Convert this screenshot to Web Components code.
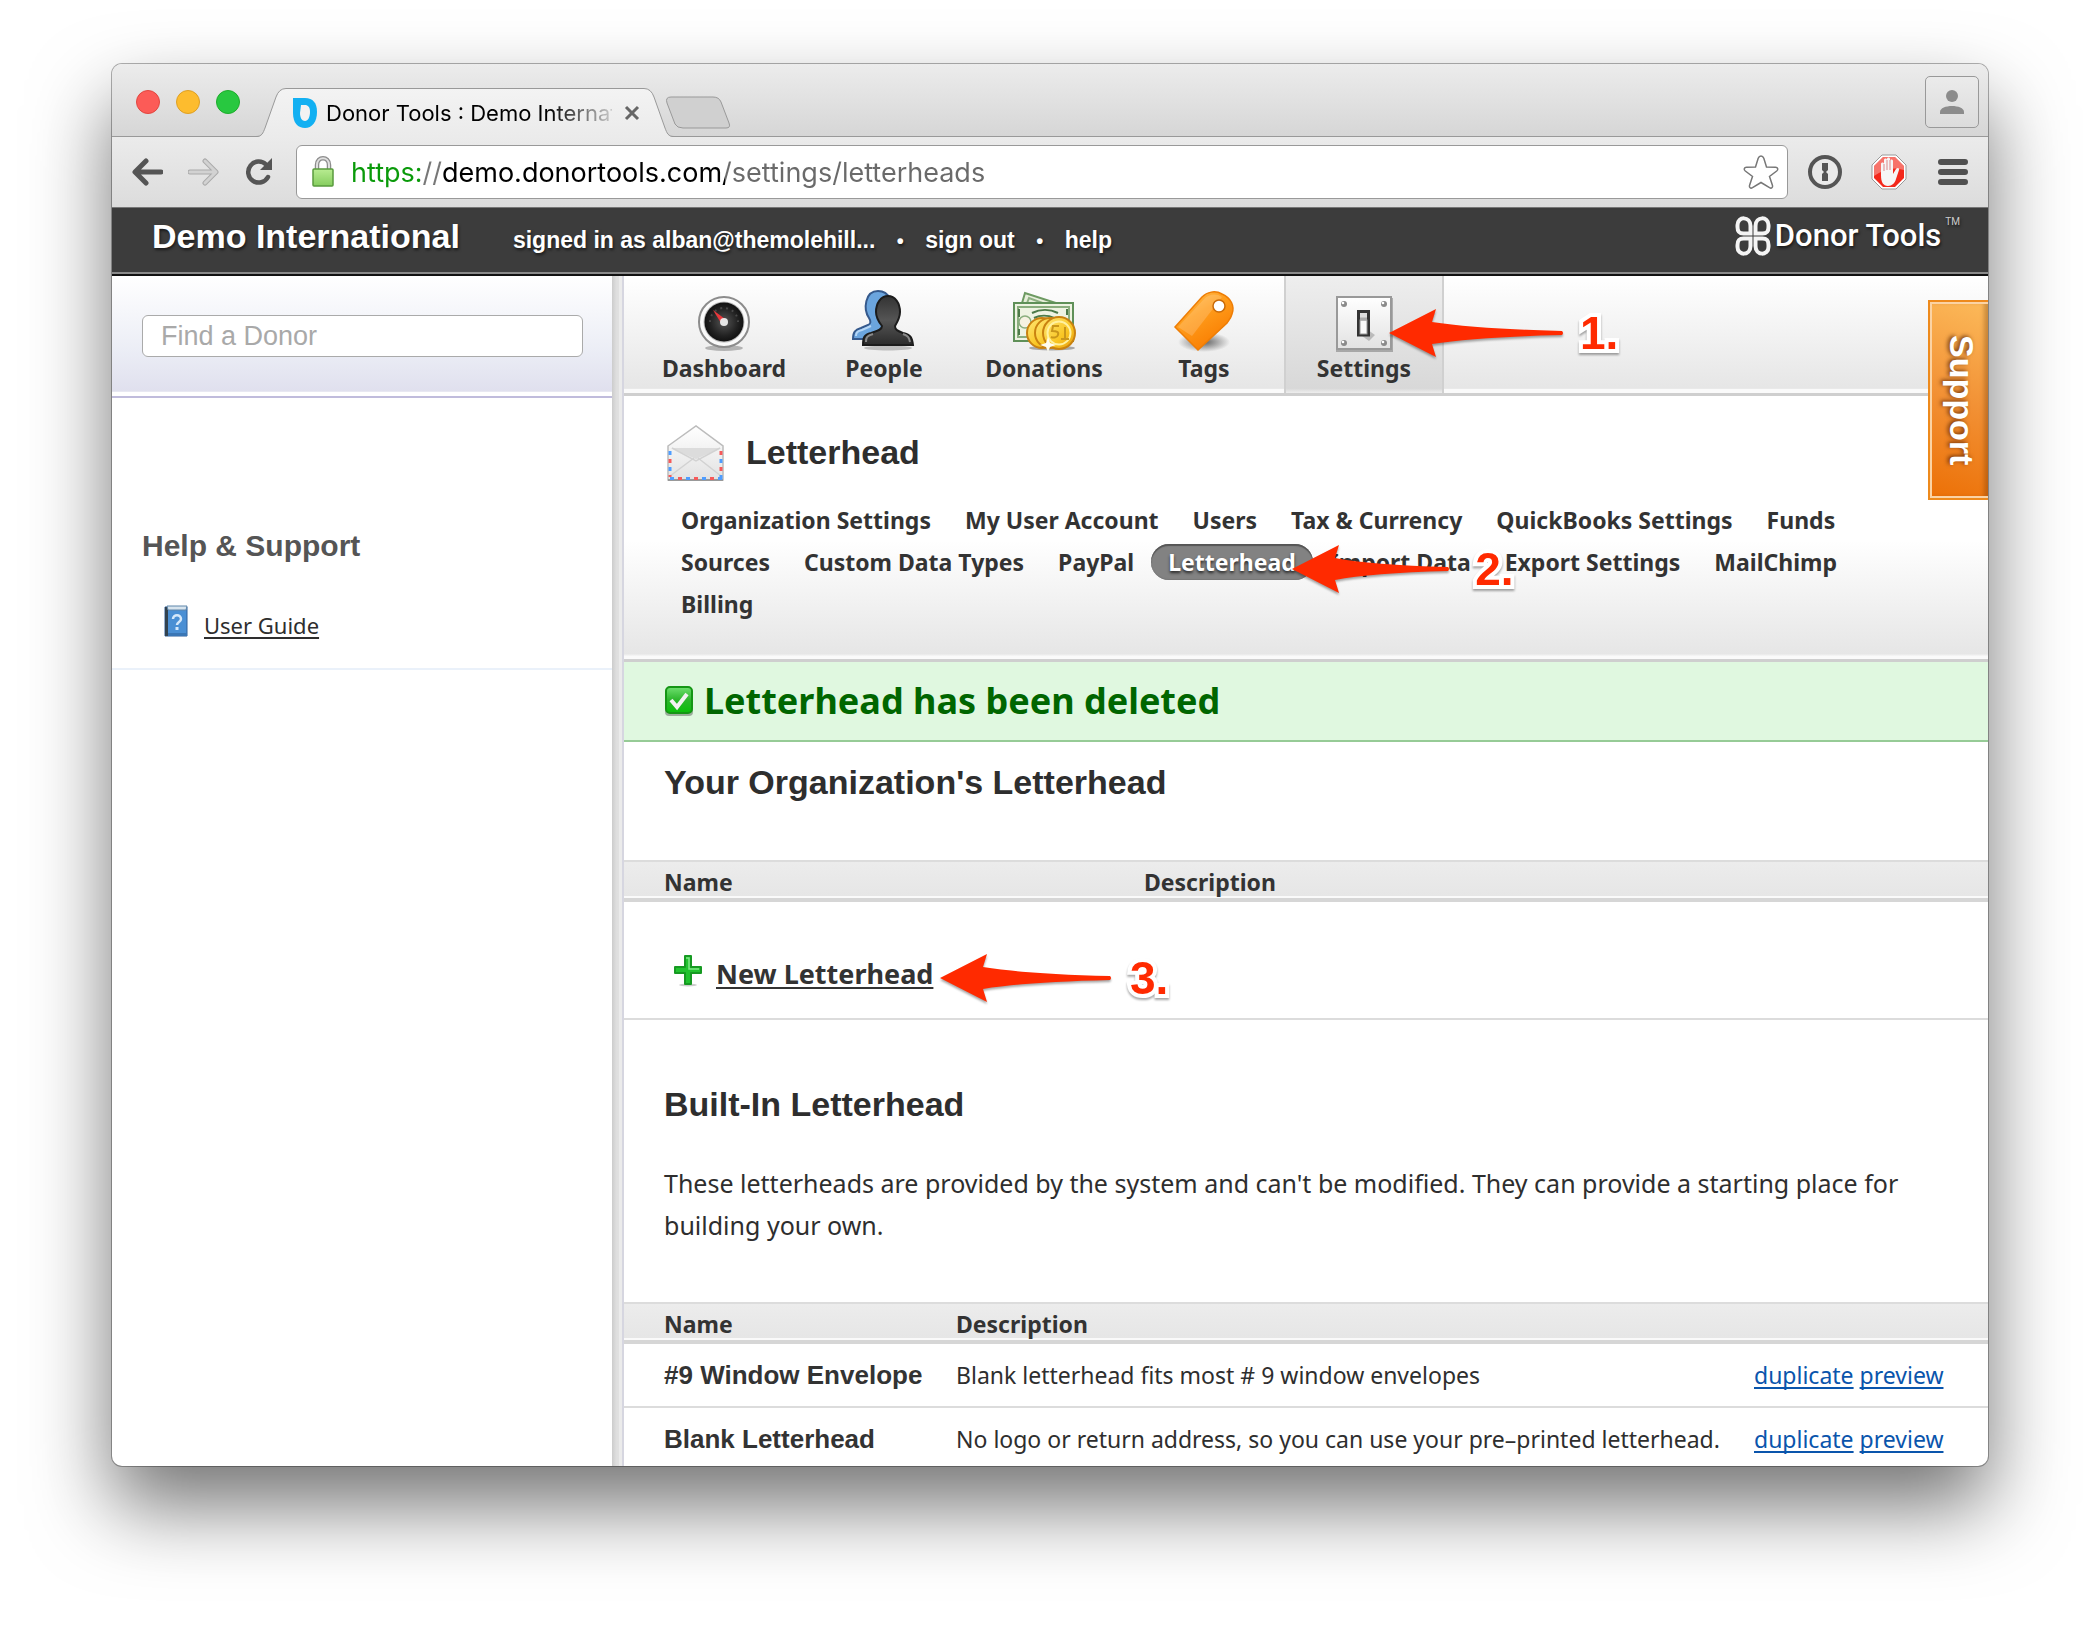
<!DOCTYPE html>
<html lang="en">
<head>
<meta charset="utf-8">
<title>Donor Tools : Demo International</title>
<style>
  html, body { height: 100%; }
  body {
    margin: 0; padding: 64px 112px 160px; box-sizing: border-box; background: #fff; overflow: hidden;
    font-family: "Noto Sans", "Open Sans", sans-serif; font-size: 23px; color: #2e2e2e;
    --head: "Liberation Sans", Arial, sans-serif;
    --chrome: Inter, Roboto, sans-serif;
  }
</style>
</head>
<body>

<app-window>
  <title-bar slot="chrome">Donor Tools : Demo International</title-bar>
  <tool-bar slot="chrome" url="https://demo.donortools.com/settings/letterheads"></tool-bar>

  <site-header org="Demo International">
    <a href="#account">signed in as alban@themolehill...</a>
    <a href="#signout">sign out</a>
    <a href="#help">help</a>
  </site-header>

  <page-columns>
    <side-bar slot="side"></side-bar>

    <main-nav>
      <nav-tab icon="gauge">Dashboard</nav-tab>
      <nav-tab icon="people">People</nav-tab>
      <nav-tab icon="money">Donations</nav-tab>
      <nav-tab icon="tag">Tags</nav-tab>
      <nav-tab icon="switch" current>Settings<note-callout slot="note" number="1." length="175"></note-callout></nav-tab>
    </main-nav>

    <page-head heading="Letterhead">
      <sub-link>Organization Settings</sub-link>
      <sub-link>My User Account</sub-link>
      <sub-link>Users</sub-link>
      <sub-link>Tax &amp; Currency</sub-link>
      <sub-link>QuickBooks Settings</sub-link>
      <sub-link>Funds</sub-link>
      <sub-link>Sources</sub-link>
      <sub-link>Custom Data Types</sub-link>
      <sub-link>PayPal</sub-link>
      <sub-link current>Letterhead<note-callout slot="note" number="2." length="158" gap="25"></note-callout></sub-link>
      <sub-link>Import Data</sub-link>
      <sub-link>Export Settings</sub-link>
      <sub-link>MailChimp</sub-link>
      <sub-link>Billing</sub-link>
    </page-head>

    <flash-message>Letterhead has been deleted</flash-message>

    <page-section heading="Your Organization's Letterhead">
      <letterhead-table></letterhead-table>
      <new-link>New Letterhead<note-callout slot="note" number="3." length="172" gap="18"></note-callout></new-link>
    </page-section>

    <page-section heading="Built-In Letterhead" spaced>
      <span slot="intro">These letterheads are provided by the system and can't be modified. They can provide a starting place for building your own.</span>
      <letterhead-table actions>
        <letterhead-item name="#9 Window Envelope">Blank letterhead fits most # 9 window envelopes</letterhead-item>
        <letterhead-item name="Blank Letterhead">No logo or return address, so you can use your pre–printed letterhead.</letterhead-item>
      </letterhead-table>
    </page-section>

    <support-tab slot="support">Support</support-tab>
  </page-columns>
</app-window>

<script>
const ICONS = {
  gauge: `<svg viewBox="0 0 64 64" width="64" height="64"><defs><radialGradient id="g"><stop offset="0" stop-color="#555"/><stop offset=".7" stop-color="#222"/><stop offset="1" stop-color="#111"/></radialGradient></defs><ellipse cx="32" cy="59" rx="19" ry="3" fill="#000" opacity=".25"/><circle cx="32" cy="33" r="25" fill="#fafafa" stroke="#8c8c8c" stroke-width="2"/><circle cx="32" cy="33" r="20.500" fill="#bbb"/><circle cx="32" cy="33" r="19.500" fill="url(#g)"/><path d="M18 33a14 14 0 0 1 28 0" fill="none" stroke="#484848" stroke-width="2" stroke-dasharray="2 4"/><path d="M21 21l12 9-4 4z" fill="#e8383c"/><circle cx="32" cy="33" r="4" fill="#e6e6e6"/></svg>`,
  people: `<svg viewBox="0 0 64 64" width="64" height="64"><defs><linearGradient id="g" x2="0" y2="1"><stop offset="0" stop-color="#333"/><stop offset=".5" stop-color="#555"/><stop offset="1" stop-color="#2b2b2b"/></linearGradient></defs><ellipse cx="36" cy="59" rx="24" ry="2.500" fill="#000" opacity=".2"/><path d="M1 50c0-7 2-9 8-11l7-3c3-1 3-4 1-7-6-9-4-27 9-27 12 0 15 12 12 24l-3 24z" fill="#6ba5de" stroke="#35598c" stroke-width="2"/><path d="M4 47c0-4 2-5 6-6l9-4" fill="none" stroke="#b5d6f5" stroke-width="2"/><path d="M11 56c0-8 1-10 8-12 6-2 11-3 11-7-4-5-6-9-6-14 0-9 5-16 12-16s12 7 12 16c0 5-2 9-5 14 0 4 3 5 8 7 8 2 9 4 10 12z" fill="url(#g)" stroke="#1c1c1c" stroke-width="2"/><path d="M14 53c0-5 1-6 7-8M58 53c-1-5-2-6-7-8" fill="none" stroke="#888" stroke-width="2"/></svg>`,
  money: `<svg viewBox="0 0 64 64" width="64" height="64"><defs><linearGradient id="g" x2="1" y2="1"><stop offset="0" stop-color="#ffe97a"/><stop offset=".6" stop-color="#f9c522"/><stop offset="1" stop-color="#e79c10"/></linearGradient></defs><ellipse cx="40" cy="59" rx="23" ry="2.500" fill="#000" opacity=".3"/><path d="M8 21L13 4l40 13-4 20z" fill="#e6eeda" stroke="#6d9a62" stroke-width="2"/><path d="M12 22L17 9l30 11" fill="none" stroke="#8db082" stroke-width="2"/><rect x="2" y="14" width="59" height="38" fill="#eef3e2" stroke="#5f9058" stroke-width="2"/><rect x="6" y="18" width="51" height="30" fill="none" stroke="#8aae7e" stroke-width="2"/><circle cx="13" cy="33" r="6" fill="#f6f2e2" stroke="#8aae7e" stroke-width="1.500"/><path d="M20 24c8-4 18-4 26 0M22 29c6-3 14-3 20 0M7 20v8M55 20v6M7 40v6" fill="none" stroke="#4d7a48" stroke-width="2"/><g fill="url(#g)" stroke="#c98210" stroke-width="2"><circle cx="30" cy="44" r="15"/><circle cx="38" cy="44" r="15"/><circle cx="47" cy="44" r="16"/></g><circle cx="47" cy="44" r="11.500" fill="none" stroke="#fff1a0" stroke-width="2"/><path d="M47 37h-6l-1 5c5 0 7 1 6 4-1 3-5 3-7 2M53 38v12M49 50h8" fill="none" stroke="#c9961a" stroke-width="2"/><path d="M36 48l2 6 6 2-6 2-2 5-2-5-6-2 6-2z" fill="#fffdf0"/></svg>`,
  tag: `<svg viewBox="0 0 64 64" width="64" height="64"><defs><linearGradient id="g" x2=".6" y2="1"><stop offset="0" stop-color="#ffc15a"/><stop offset=".45" stop-color="#ff9d1c"/><stop offset="1" stop-color="#f97c00"/></linearGradient><radialGradient id="s"><stop offset="0" stop-opacity=".6"/><stop offset="1" stop-opacity="0"/></radialGradient></defs><ellipse cx="32" cy="53" rx="26" ry="10" fill="url(#s)"/><path d="M3 38L30 8c5-5 13-7 20-3 9 4 13 12 10 20-1 4-3 6-5 9L26 61z" fill="url(#g)" stroke="#ee7d05" stroke-width="1.500"/><path d="M6 38L32 10c5-5 12-6 18-2L20 47 6 38z" fill="#fff" opacity=".18"/><circle cx="47" cy="17" r="6" fill="#fff" stroke="#c96a08" stroke-width="1.500"/></svg>`,
  switch: `<svg viewBox="0 0 64 64" width="64" height="64"><defs><linearGradient id="g" x2="0" y2="1"><stop offset="0" stop-color="#fff"/><stop offset="1" stop-color="#e2e2e2"/></linearGradient></defs><rect x="4" y="9" width="57" height="54" fill="#000" opacity=".25"/><rect x="5" y="8" width="54" height="52" fill="url(#g)" stroke="#999" stroke-width="2"/><g fill="#8a8a8a"><circle cx="12" cy="15" r="3"/><circle cx="52" cy="15" r="3"/><circle cx="12" cy="54" r="3"/><circle cx="52" cy="54" r="3"/></g><g fill="#fff"><circle cx="11" cy="14" r="1.300"/><circle cx="51" cy="14" r="1.300"/><circle cx="11" cy="53" r="1.300"/><circle cx="51" cy="53" r="1.300"/></g><path d="M36 41l7 5-6 6-7-5z" fill="#000" opacity=".2"/><path d="M26.500 46V22.500h10V46z" fill="#ddd" stroke="#333" stroke-width="3"/><rect x="28" y="31" width="7" height="14" fill="#fafafa" stroke="#999" stroke-width="1"/><path d="M28 30h7" stroke="#aaa" stroke-width="3"/></svg>`,
  envelope: `<svg viewBox="0 0 60 60" width="60" height="60"><defs><linearGradient id="g" x2="0" y2="1"><stop offset="0" stop-color="#fff"/><stop offset="1" stop-color="#e2e2e2"/></linearGradient></defs><path d="M2 22L30 2l27 20v34H2z" fill="url(#g)" stroke="#bcbcbc" stroke-width="1.500"/><path d="M5 24h50L30 35z" fill="#dcdcdc"/><path d="M4 52l24-18M55 52L32 34M6 24l24 13 24-13" fill="none" stroke="#d2d2d2" stroke-width="1.500"/><path d="M2 56h55" stroke="#999" stroke-width="2"/><g fill="none" stroke-width="3"><path d="M4 27v28" stroke="#4f9dff" stroke-dasharray="4 12"/><path d="M4 35v18" stroke="#f65a5a" stroke-dasharray="4 12"/><path d="M55 27v24" stroke="#f65a5a" stroke-dasharray="4 12"/><path d="M55 35v20" stroke="#4f9dff" stroke-dasharray="4 12"/><path d="M4 54.500h53" stroke="#4f9dff" stroke-dasharray="4 12"/><path d="M12 54.500h40" stroke="#f65a5a" stroke-dasharray="4 12"/></g></svg>`,
  check: `<svg viewBox="0 0 30 32" width="30" height="32"><defs><linearGradient id="g" x2="0" y2="1"><stop offset="0" stop-color="#6fe070"/><stop offset=".5" stop-color="#2cb62c"/><stop offset="1" stop-color="#08c008"/></linearGradient></defs><rect x="1" y="3" width="28" height="28" rx="4" fill="#000" opacity=".3"/><rect x="2" y="2" width="26" height="26" rx="4" fill="url(#g)" stroke="#159615" stroke-width="2"/><path d="M7 15l6 7L23 9" fill="none" stroke="#f2f2f2" stroke-width="4"/></svg>`,
  plus: `<svg viewBox="0 0 30 32" width="30" height="32"><ellipse cx="15" cy="30" rx="9" ry="1.500" fill="#000" opacity=".2"/><path d="M12 1h6v11h10v6H18v11h-6V18H2v-6h10z" fill="#22c32f" stroke="#169a22" stroke-width="2" stroke-linejoin="round"/><path d="M13 3h3v11h10" fill="none" stroke="#7fe886" stroke-width="1.500"/></svg>`,
  book: `<svg viewBox="0 0 28 32" width="28" height="32"><path d="M3 2h22v29H3z" fill="#4a8fd4" stroke="#2c5f9c" stroke-width="1"/><path d="M3 2h3v29H3z" fill="#32424f"/><path d="M5 1h20l-1 4H6z" fill="#d7e4ee" stroke="#5e86aa" stroke-width="1"/><path d="M6 28h19v3H6z" fill="#3a76b5"/><path d="M11 14c0-5 8-5 8 0 0 3-4 3-4 6" fill="none" stroke="#d5e8fa" stroke-width="2.500"/><rect x="13.500" y="22" width="3" height="3" fill="#d5e8fa"/></svg>`,
  favicon: `<svg viewBox="0 0 26 32" width="26" height="32"><path d="M1 1h12c8 0 12 5 12 14 0 10-5 16-12 16S1 26 1 16z" fill="#12b0f2"/><path d="M9 8h4c3 0 5 2 5 7s-2 9-5 9-5-3-5-8z" fill="#f2f2f2"/></svg>`,
  close: `<svg viewBox="0 0 16 16" width="16" height="16"><path d="M2 2l12 12M14 2L2 14" stroke="#666" stroke-width="3"/></svg>`,
  back: `<svg viewBox="0 0 32 28" width="32" height="28"><path d="M30 14H5M15 3L4 14l11 11" fill="none" stroke="currentColor" stroke-width="5" stroke-linejoin="round" stroke-linecap="round"/></svg>`,
  forward: `<svg viewBox="0 0 32 28" width="32" height="28"><path d="M2 14h25M17 3l11 11-11 11" fill="none" stroke="#aaa" stroke-width="5" stroke-linejoin="round" stroke-linecap="round"/><path d="M2 14h25M17 3l11 11-11 11" fill="none" stroke="#d2d2d2" stroke-width="3" stroke-linejoin="round" stroke-linecap="round"/></svg>`,
  reload: `<svg viewBox="0 0 28 28" width="28" height="28"><path d="M23 19a10.500 10.500 0 1 1-2-12.500" fill="none" stroke="currentColor" stroke-width="4.500" stroke-linecap="round"/><path d="M27 0v12H15z" fill="currentColor"/></svg>`,
  lock: `<svg viewBox="0 0 24 32" width="24" height="32"><path d="M6 14V9c0-9 12-9 12 0v5" fill="none" stroke="#8d8d8d" stroke-width="4.500"/><path d="M6 14V9c0-9 12-9 12 0v5" fill="none" stroke="#e0e0e0" stroke-width="2"/><defs><linearGradient id="g" x2="0" y2="1"><stop offset="0" stop-color="#b9ec92"/><stop offset="1" stop-color="#85cd5e"/></linearGradient></defs><rect x="2" y="13" width="20" height="17" rx="1" fill="url(#g)" stroke="#589a3c" stroke-width="1.500"/></svg>`,
  star: `<svg viewBox="0 0 36 36" width="36" height="36"><path d="M18 2c1.500 0 2.300 1 2.800 2.300L23.500 13l9 .3c2.500.2 3 2.200 1.200 3.700L26.500 22.500l3 9c.5 2-1 3.300-3 2.200L18 28.500l-8.500 5.200c-2 1.100-3.500-.2-3-2.200l3-9L2.300 17C.5 15.500 1 13.500 3.500 13.300l9-.3 2.700-8.700C15.700 3 16.500 2 18 2z" fill="#fff" stroke="#777" stroke-width="1.500"/></svg>`,
  key: `<svg viewBox="0 0 36 36" width="36" height="36"><circle cx="18" cy="18" r="15" fill="#e9e9e9" stroke="#555" stroke-width="4"/><path d="M15 9h6v7l-2 2 2 2v7h-6v-7l2-2-2-2z" fill="#555"/></svg>`,
  hand: `<svg viewBox="0 0 36 36" width="36" height="36"><path d="M11 1h14l10 10v14L25 35H11L1 25V11z" fill="#fff" stroke="#999" stroke-width="1"/><path d="M12 3h12l9 9v12l-9 9H12l-9-9V12z" fill="#f3281b"/><path d="M12 3h12l9 9v4C22 12 12 16 3 22V12z" fill="#fff" opacity=".35"/><path d="M10 21V10c0-2 3-2 3 0V6c0-2 3-2 3 0V5c0-2 3-2 3 0v2c0-2 3-2 3 0v13l3-5c1-2 4-1 3 1l-3 9c-1 4-4 7-8 7-5 0-7-4-7-11z" fill="#f6f6f6"/><path d="M13 10v7M16 6v10M19 6v10" stroke="#d88" stroke-width="1"/></svg>`,
  menu: `<svg viewBox="0 0 30 28" width="30" height="28"><path d="M3 4h24M3 14h24M3 24h24" stroke="#505050" stroke-width="6" stroke-linecap="round"/></svg>`,
  person: `<svg viewBox="0 0 26 26" width="26" height="26"><circle cx="13" cy="7" r="6" fill="#8c8c8c"/><path d="M1 25v-2c0-4 6-6 12-6s12 2 12 6v2z" fill="#8c8c8c"/></svg>`,
  logo: `<svg viewBox="0 0 36 40" width="36" height="40"><g fill="none" stroke="#f4f4f4" stroke-width="4"><path d="M15.500 17.500V10C15.500 0 2.500 0 2.500 9v2c0 5 2 6.500 6 6.500zM20.500 17.500V10c0-10 13-10 13-1v2c0 5-2 6.500-6 6.500zM15.500 22.500V30c0 10-13 10-13 1v-2c0-5 2-6.500 6-6.500zM20.500 22.500V30c0 10 13 10 13 1v-2c0-5-2-6.500-6-6.500z"/></g></svg>`
};

const define = (name, template, setup) => customElements.define(name, class extends HTMLElement {
  constructor() {
    super();
    this.attachShadow({ mode: "open" }).innerHTML =
      "<style>:host,*{box-sizing:border-box}svg{display:block;flex:none}</style>" + (typeof template === "function" ? template(this) : template);
    if (setup) setup(this, this.shadowRoot);
  }
});

define("ui-icon", el => `<style>:host{display:block;flex:none}</style>${ICONS[el.getAttribute("name")]}`);

define("app-window", `<style>
  :host{display:flex;flex-direction:column;height:100%;border-radius:10px;background:#fff;overflow:hidden;
    box-shadow:0 0 0 1px rgba(0,0,0,.3),0 40px 80px rgba(0,0,0,.55)}
  .view{flex:1;min-height:0;overflow:hidden;display:flex;flex-direction:column}
</style><slot name="chrome"></slot><div class="view"><slot></slot></div>`);

define("title-bar", `<style>
  :host{display:flex;height:73px;flex:none;background:linear-gradient(#ececec,#d6d6d6);border-bottom:1px solid #999;padding:0 9px 0 24px;font-family:var(--chrome);color:#000}
  .lights{display:flex;gap:16px;align-items:center;height:76px;margin-right:16px}
  .lights button{width:24px;height:24px;border-radius:50%;padding:0;border:1px solid}
  .r{background:#fc5b57;border-color:#e2463f!important}.y{background:#fdbc2e;border-color:#dfa023!important}.g{background:#28c840;border-color:#1dad2b!important}
  .tab{position:relative;width:420px;margin-top:24px;height:49px;display:flex;align-items:center;padding:0 36px}
  .tab>svg{position:absolute;left:0;top:0}
  .tab>*:not(svg){position:relative}
  .t{flex:1;margin:0 12px 0 8px;font-size:22px;white-space:nowrap;overflow:hidden;-webkit-mask:linear-gradient(90deg,#000 78%,rgba(0,0,0,.15))}
  .x{border:0;background:none;padding:0}
  .new{border:0;background:none;padding:0;margin:32px 0 0 -11px;height:34px}
  .p{margin:12px 0 0 auto;width:54px;height:52px;border:1px solid #999;border-radius:5px;background:linear-gradient(#ebebeb,#dcdcdc);display:flex;align-items:center;justify-content:center;padding:0}
</style>
<div class="lights"><button class="r" aria-label="Close window"></button><button class="y" aria-label="Minimise"></button><button class="g" aria-label="Zoom"></button></div>
<div class="tab"><svg width="420" height="49" viewBox="0 0 420 49"><defs><linearGradient id="t" x2="0" y2="1"><stop offset="0" stop-color="#f3f3f3"/><stop offset="1" stop-color="#ebebeb"/></linearGradient></defs>
<path d="M0 49C6 49 7 45 9 40L20 9Q23 .5 30 .5H388Q395 .5 398 9L409 40C411 45 412 49 418 49z" fill="url(#t)"/><path d="M0 48.500C6 48.500 7 45 9 40L20 9Q23 .5 30 .5H388Q395 .5 398 9L409 40C411 45 412 48.500 418 48.500" fill="none" stroke="#999"/></svg>
<ui-icon name="favicon"></ui-icon><span class="t"><slot></slot></span><button class="x" aria-label="Close tab"><ui-icon name="close"></ui-icon></button></div>
<button class="new" aria-label="New tab"><svg width="66" height="34" viewBox="0 0 66 34"><path d="M6 1H48Q54 1 56 6L64 27Q66 32 61 32H18Q12 32 10 28L2 7Q0 1 6 1z" fill="#d0d0d0" stroke="#999"/></svg></button>
<button class="p" aria-label="Profile"><ui-icon name="person"></ui-icon></button>`);

define("tool-bar", `<style>
  :host{display:flex;align-items:center;height:71px;flex:none;padding:0 20px 0 19px;background:linear-gradient(#ebebeb,#dcdcdc);border-bottom:1px solid #777;font-family:var(--chrome)}
  button{border:0;background:none;padding:0;color:#555}
  .nav{display:flex;gap:25px;align-items:center;margin-right:23px}
  .box{flex:1;height:54px;display:flex;align-items:center;background:#fff;border:1px solid #999;border-radius:6px;padding:0 8px 0 14px;gap:16px}
  input{flex:1;min-width:0;border:0;outline:0;padding:0;height:40px;font:27px var(--chrome);color:#666;
    background:linear-gradient(90deg,#0a9a0a 69px,#777 69px 92px,#000 92px 374px,#6a6a6a 374px);-webkit-background-clip:text;background-clip:text;-webkit-text-fill-color:transparent}
  .ext{display:flex;gap:28px;align-items:center;margin-left:19px}
  .menu{padding-left:3px}
</style>
<div class="nav"><button aria-label="Back"><ui-icon name="back"></ui-icon></button><button aria-label="Forward"><ui-icon name="forward"></ui-icon></button><button aria-label="Reload"><ui-icon name="reload"></ui-icon></button></div>
<div class="box"><ui-icon name="lock"></ui-icon><input type="text" aria-label="Address"><button aria-label="Bookmark"><ui-icon name="star"></ui-icon></button></div>
<div class="ext"><button aria-label="Passwords"><ui-icon name="key"></ui-icon></button><button aria-label="Ad blocker"><ui-icon name="hand"></ui-icon></button><button class="menu" aria-label="Menu"><ui-icon name="menu"></ui-icon></button></div>`,
  (el, root) => { root.querySelector("input").value = el.getAttribute("url"); });

define("site-header", el => `<style>
  :host{display:flex;flex:none;align-items:baseline;height:68px;padding:8px 28px 0 40px;background:#3c3c3c;border-bottom:2px solid #111;box-shadow:inset 0 -2px #8a8a8a;font-family:var(--head);font-weight:bold;color:#fff;text-shadow:1px 2px 3px rgba(0,0,0,.6)}
  h1{margin:0 53px 0 0;font-size:34px;line-height:40px}
  nav{display:flex;font-size:23px}
  ::slotted(a){color:#fff;text-decoration:none}
  ::slotted(a:not(:first-child))::before{content:"•";display:inline-block;width:50px;text-align:center;font-size:20px}
  .logo{margin-left:auto;display:flex;align-items:center;gap:4px;align-self:flex-start;font:500 31px/40px Roboto,var(--head)}
  sup{font-size:10px;line-height:12px;align-self:flex-start;font-weight:normal;color:#ccc}
</style><h1>${el.getAttribute("org")}</h1><nav><slot></slot></nav><div class="logo"><ui-icon name="logo"></ui-icon><span>Donor Tools</span><sup>TM</sup></div>`);

define("page-columns", `<style>
  :host{display:flex;position:relative;flex:1;min-height:0;align-items:stretch}
  .side{width:500px;flex:none}
  .rule{width:12px;flex:none;background:linear-gradient(90deg,#ccc,#dedede 35%,#e0e0e0 55%,#ebebeb 60%,#ebebeb 83%,#d6d6e0 84%)}
  .main{flex:1;min-width:0}
</style><div class="side"><slot name="side"></slot></div><div class="rule"></div><div class="main"><slot></slot></div><slot name="support"></slot>`);

define("side-bar", `<style>
  :host{display:block}
  form{height:122px;padding:39px 29px 0 30px;background:linear-gradient(#fff,#eceef6 60%,#e0e0ee 96%,#fff 97%);border-bottom:2px solid #c0bcdc;margin:0}
  input{display:block;width:100%;height:42px;border:1px solid #aaa;border-radius:6px;padding:0 18px;font:27px var(--head);background:#fff;color:#333}
  input::placeholder{color:#a9a9a9;opacity:1}
  section{padding:126px 30px 30px;border-bottom:2px solid #eaf1fa}
  h3{margin:0 0 36px;font:bold 30px/44px var(--head);color:#555}
  .g{display:flex;align-items:center;gap:14px;padding-left:20px;height:34px}
  a{color:#2e2e2e;font-size:22px;text-decoration-thickness:2px;text-underline-offset:3px;text-decoration-skip-ink:none;padding-top:7px}
</style><form><input type="search" placeholder="Find a Donor" aria-label="Find a Donor"></form>
<section><h3>Help &amp; Support</h3><div class="g"><ui-icon name="book"></ui-icon><a href="#guide">User Guide</a></div></section>`);

define("main-nav", `<style>:host{display:flex;height:120px;padding-left:20px;background:linear-gradient(#fff,#e6e6e6 96%,#fafafa 97%);border-bottom:3px solid #cfcfcf}</style><slot></slot>`);

define("nav-tab", el => `<style>
  :host{display:block;position:relative;width:160px}
  a{display:flex;flex-direction:column;align-items:center;height:100%;padding-top:13px;font-weight:bold;font-size:23px;line-height:30px;color:#333;text-decoration:none;border:solid transparent;border-width:0 2px}
  :host([current]) a{background:linear-gradient(#eee,#d8d8d8 96%,#eee);border-color:#d0d0d0}
  ::slotted(note-callout){position:absolute;left:105px;top:33px;z-index:2}
</style><a href="#${el.getAttribute("icon")}"><ui-icon name="${el.getAttribute("icon")}"></ui-icon><span><slot></slot></span></a><slot name="note"></slot>`);

define("page-head", el => `<style>
  :host{display:block;padding:28px 40px 34px;background:linear-gradient(#fff 55%,#e6e6e6 98%,#fafafa 99%);border-bottom:3px solid #cfcfcf}
  header{display:flex;align-items:center;gap:20px;height:60px;margin:0 0 15px 2px}
  h2{margin:0;padding-bottom:4px;font:bold 34px/40px var(--head)}
  nav{display:flex;flex-wrap:wrap}
</style><header><ui-icon name="envelope"></ui-icon><h2>${el.getAttribute("heading")}</h2></header><nav><slot></slot></nav>`);

define("sub-link", `<style>
  :host{display:flex;align-items:center;position:relative;height:42px}
  a{display:block;padding:0 17px;line-height:36px;border-radius:18px;font-weight:bold;font-size:23px;color:#333;text-decoration:none;white-space:nowrap}
  :host([current]) a{background:#828282;color:#fff;box-shadow:inset 0 2px 1px #555,inset 0 -1px 1px #777;text-shadow:0 2px 3px rgba(0,0,0,.7)}
  ::slotted(note-callout){position:absolute;left:141px;top:4px;z-index:2}
</style><a href="#section"><slot></slot></a><slot name="note"></slot>`);

define("flash-message", `<style>
  :host{display:flex;align-items:center;gap:10px;height:80px;padding:0 40px;background:#e0f8e0;border-bottom:2px solid #96cb96;color:#060;font-weight:bold;font-size:36px;line-height:48px}
</style><ui-icon name="check"></ui-icon><span role="status"><slot></slot></span>`);

define("page-section", el => `<style>
  :host{display:block}
  h2{margin:0 40px;padding:18px 0 56px;font:bold 34px/44px var(--head)}
  :host([spaced]) h2{padding:62px 0 36px}
  p{margin:0 40px 56px;font-size:25px;line-height:42px}
</style><h2>${el.getAttribute("heading")}</h2>${el.hasAttribute("spaced") ? `<p><slot name="intro"></slot></p>` : ""}<slot></slot>`);

define("letterhead-item", "<slot></slot>");

define("letterhead-table", el => {
  const actions = el.hasAttribute("actions");
  const rows = [...el.children].map(r => `<tr><th scope="row">${r.getAttribute("name")}</th><td>${r.textContent}</td><td><a href="#duplicate">duplicate</a> <a href="#preview">preview</a></td></tr>`).join("");
  return `<style>
  :host{display:block}
  table{width:100%;table-layout:fixed;border-collapse:separate;border-spacing:0}
  th,td{padding:0;text-align:left;white-space:nowrap}
  thead th{height:42px;padding-top:3px;font-size:23px;line-height:30px;background:linear-gradient(#ececec,#e6e6e6 94%,#fafafa 95%);border-top:2px solid #dcdcdc;border-bottom:4px solid #d6d6d6;color:#333}
  th:first-child{padding-left:40px;width:${actions ? 332 : 520}px}
  .act{width:234px}
  tbody th{font:bold 26px/30px var(--head);color:#333}
  tbody th,tbody td{height:64px;border-bottom:2px solid #dcdcdc}
  td{font-size:23px;line-height:30px}
  td a{color:#0a55ac;text-decoration-thickness:2px;text-underline-offset:3px;text-decoration-skip-ink:none}
  </style><table><thead><tr><th scope="col">Name</th><th scope="col">Description</th>${actions ? `<th class="act" aria-label="Actions"></th>` : ""}</tr></thead>${rows ? `<tbody>${rows}</tbody>` : ""}</table>`;
});

define("new-link", `<style>
  :host{display:flex;align-items:center;gap:13px;height:118px;padding:18px 49px 0;border-bottom:2px solid #dcdcdc}
  .w{position:relative;display:flex;align-items:center;height:34px;padding-top:10px}
  a{color:#333;font-weight:bold;font-size:27px;line-height:34px;text-decoration-thickness:2px;text-underline-offset:3px;text-decoration-skip-ink:none}
  ui-icon{padding-top:4px}
  ::slotted(note-callout){position:absolute;left:224px;top:2px;z-index:2}
</style><ui-icon name="plus"></ui-icon><div class="w"><a href="#new"><slot></slot></a><slot name="note"></slot></div>`);

define("note-callout", el => {
  const w = +el.getAttribute("length");
  return `<style>
  :host{display:flex;align-items:center;gap:${el.getAttribute("gap") || 16}px;height:48px;pointer-events:none}
  svg{overflow:visible;filter:drop-shadow(0 2px 1px rgba(0,0,0,.35))}
  b{font:bold 46px/48px var(--head);color:#ff2a00;-webkit-text-stroke:8px #fff;paint-order:stroke fill;filter:drop-shadow(0 2px 1px rgba(0,0,0,.35))}
  </style><svg width="${w}" height="48" viewBox="0 0 ${w} 48"><path d="M0 24L47 0l-4 13Q${w / 2} 20 ${w - 2} 22q2 2 0 4Q${w / 2} 28 43 35l4 13z" fill="#ff2a00"/></svg><b>${el.getAttribute("number")}</b>`;
});

define("support-tab", `<style>
  :host{position:absolute;right:0;top:24px;display:block}
  button{display:flex;align-items:center;justify-content:center;width:60px;height:200px;padding:0 0 0 6px;border:2px solid #ee8a1c;border-right:0;background:linear-gradient(20deg,#ec7006,#f29135 50%,#fcba5a);box-shadow:inset 2px 2px #fbd3a4,inset 0 -2px #fbd3a4,inset -4px 0 4px rgba(90,40,0,.3);color:#fff;font:bold 34px/40px var(--head);writing-mode:vertical-rl;text-shadow:-1px 2px 4px rgba(80,30,0,.8)}
</style><button><slot></slot></button>`);
</script>
</body>
</html>
